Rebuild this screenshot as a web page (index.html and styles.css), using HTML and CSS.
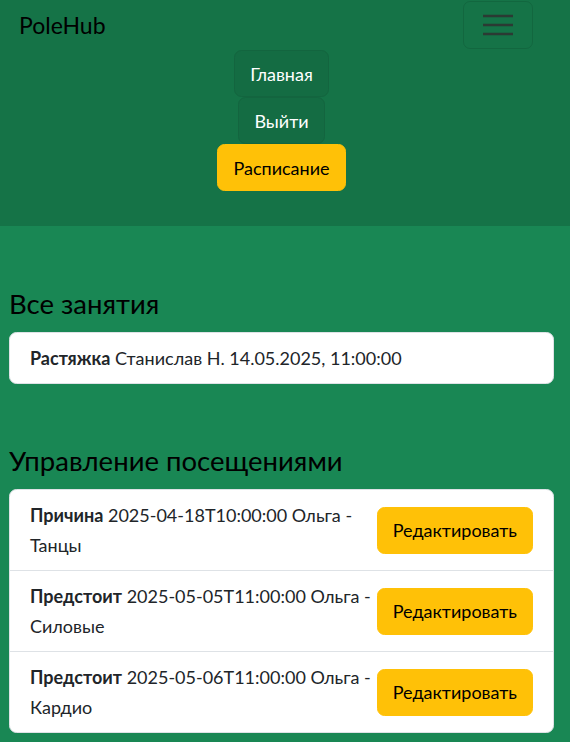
FILE: index.html
```html
<!DOCTYPE html>
<html lang="ru">
<head>
<meta charset="utf-8">
<title>PoleHub</title>
<link rel="stylesheet" href="styles.css">
</head>
<body>
<nav class="navbar">
  <div class="wrap">
    <div class="nav-top">
      <span class="brand">PoleHub</span>
      <button class="toggler" aria-label="menu">
        <svg width="30" height="24" viewBox="0 0 30 24"><path d="M0 3h30M0 12h30M0 21h30" stroke="#2b3a33" stroke-width="2.4"/></svg>
      </button>
    </div>
    <div class="nav-menu">
      <a class="btn btn-green">Главная</a>
      <a class="btn btn-green">Выйти</a>
      <a class="btn btn-yellow">Расписание</a>
    </div>
  </div>
</nav>
<main class="wrap">
  <h2 class="title">Все занятия</h2>
  <ul class="list">
    <li class="item"><span><b>Растяжка</b> Станислав Н. 14.05.2025, 11:00:00</span></li>
  </ul>
  <h2 class="title second">Управление посещениями</h2>
  <ul class="list">
    <li class="item row"><span class="text"><b>Причина</b> 2025-04-18T10:00:00 Ольга&nbsp;- Танцы</span><a class="btn btn-yellow">Редактировать</a></li>
    <li class="item row"><span class="text"><b>Предстоит</b> 2025-05-05T11:00:00 Ольга&nbsp;- Силовые</span><a class="btn btn-yellow">Редактировать</a></li>
    <li class="item row"><span class="text"><b>Предстоит</b> 2025-05-06T11:00:00 Ольга&nbsp;- Кардио</span><a class="btn btn-yellow">Редактировать</a></li>
  </ul>
</main>
</body>
</html>
```

FILE: styles.css
```css
* { box-sizing: border-box; }
html, body { margin: 0; padding: 0; }
body {
  background: #198754;
  font-family: Lato, "Noto Sans", sans-serif;
  font-size: 18px;
  line-height: 30px;
  color: #212529;
  min-height: 742px;
}
.wrap { padding-left: 9px; padding-right: 16px; }
.navbar { background: #157347; padding-bottom: 35px; }
.nav-top {
  display: flex;
  justify-content: space-between;
  align-items: flex-start;
  height: 50px;
}
.brand {
  color: #000;
  font-size: 23px;
  line-height: 30px;
  margin-left: 10px;
  margin-top: 10px;
}
.toggler {
  width: 70px;
  height: 48px;
  margin-top: 1px;
  margin-right: 21px;
  background: transparent;
  border: 1px solid rgba(0,0,0,0.1);
  border-radius: 7px;
  display: flex;
  align-items: center;
  justify-content: center;
  padding: 0;
}
.nav-menu {
  display: flex;
  flex-direction: column;
  align-items: center;
}
.btn {
  display: inline-block;
  padding: 7.5px 15px;
  border: 1px solid transparent;
  border-radius: 7.5px;
  font-size: 18px;
  line-height: 30px;
  text-align: center;
  white-space: nowrap;
}
.btn-green { background: #146c43; border-color: #13653f; color: #fff; }
.btn-yellow { background: #ffc107; border-color: #ffc107; color: #000; }
.title {
  margin: 60px 0 10px;
  font-size: 27.5px;
  line-height: 36px;
  font-weight: 400;
  color: #000;
}
.title.second { margin-top: 59px; }
.list {
  list-style: none;
  margin: 0;
  padding: 0;
  background: #fff;
  border-radius: 7.5px;
  border: 1px solid #dee2e6;
}
.item {
  padding: 10px 20px;
  border-top: 1px solid #dee2e6;
}
.item:first-child { border-top: 0; }
.row {
  display: flex;
  align-items: center;
  justify-content: space-between;
}
.text { flex: 1; padding-right: 4px; }
b { font-weight: 700; }
```
